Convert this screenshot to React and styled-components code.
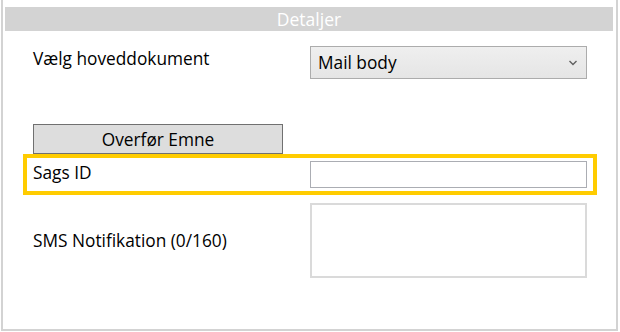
import React from 'react'
import styled, { createGlobalStyle } from 'styled-components'

const GlobalStyle = createGlobalStyle`
  html, body {
    margin: 0;
    padding: 0;
    background: #ffffff;
  }
  body {
    font-family: "Open Sans", "Noto Sans", "Liberation Sans", sans-serif;
    color: #000;
  }
`

const Frame = styled.div`
  box-sizing: border-box;
  margin-left: 1px;
  width: 617px;
  height: 331px;
  border: 2px solid #d3d3d3;
  border-top: none;
  padding-top: 7px;
`

const Header = styled.div`
  margin: 0 3px 0 2px;
  height: 24px;
  background: #d3d3d3;
  color: #ffffff;
  font-size: 17.5px;
  line-height: 24px;
  text-align: center;
`

const Body = styled.div`
  padding: 0 0 0 30px;
  width: 554px;
`

const Row = styled.div`
  display: flex;
  align-items: ${p => p.$align || 'center'};
  margin-top: ${p => p.$top || 0}px;
`

const Highlight = styled(Row)`
  margin-left: -10px;
  margin-right: -10px;
  padding: 3px 6px;
  border: 4px solid #ffcc00;
`

const Label = styled.div`
  width: 277px;
  font-size: 17.3px;
  line-height: 22px;
  padding-top: ${p => p.$pad || 0}px;
  padding-bottom: ${p => p.$padBottom || 0}px;
`

const Select = styled.div`
  box-sizing: border-box;
  width: 277px;
  height: 33px;
  border: 1px solid #acacac;
  background: linear-gradient(#efefef, #e5e5e5);
  display: flex;
  align-items: center;
  justify-content: space-between;
  padding: 0 8px 0 7px;
  font-size: 17.3px;
`

const Button = styled.div`
  box-sizing: border-box;
  width: 250px;
  height: 30px;
  border: 1px solid #707070;
  background: #dddddd;
  display: flex;
  align-items: center;
  justify-content: center;
  font-size: 17.3px;
`

const Input = styled.div`
  box-sizing: border-box;
  width: 277px;
  height: ${p => p.$h || 27}px;
  border: ${p => p.$soft ? '2px solid #dadada' : '1px solid #abadb3'};
  background: #ffffff;
`

const Chevron = () => (
  <svg width="10" height="6" viewBox="0 0 10 6">
    <path d="M1.5 1 L5 4.5 L8.5 1" fill="none" stroke="#606060" strokeWidth="1.4" />
  </svg>
)

export default function App() {
  return (
    <>
      <GlobalStyle />
      <Frame>
        <Header>Detaljer</Header>
        <Body>
          <Row $top={15} $align="flex-start">
            <Label $pad={2}>Vælg hoveddokument</Label>
            <Select>
              <span>Mail body</span>
              <Chevron />
            </Select>
          </Row>
          <Row $top={45}>
            <Button>Overfør Emne</Button>
          </Row>
          <Highlight>
            <Label $padBottom={4}>Sags ID</Label>
            <Input />
          </Highlight>
          <Row $top={8}>
            <Label>SMS Notifikation (0/160)</Label>
            <Input $h={75} $soft />
          </Row>
        </Body>
      </Frame>
    </>
  )
}
